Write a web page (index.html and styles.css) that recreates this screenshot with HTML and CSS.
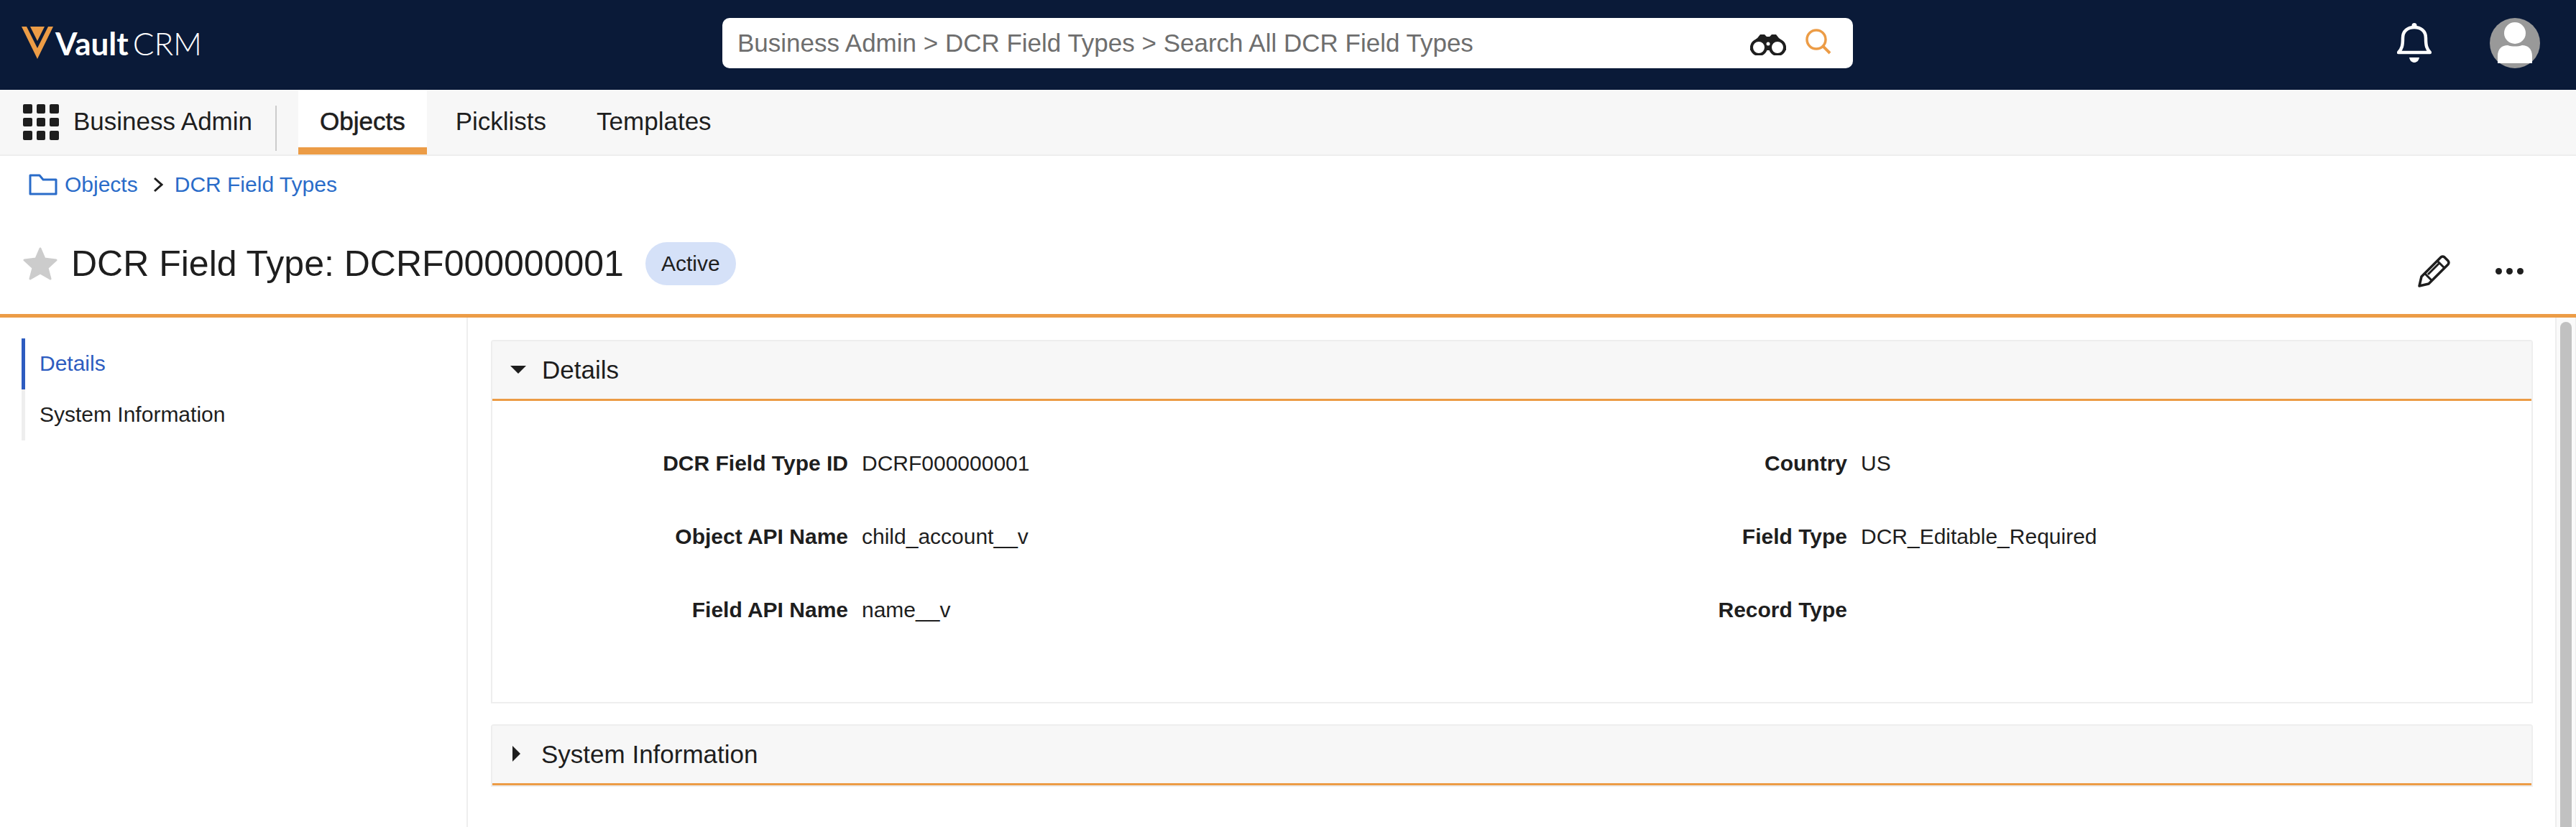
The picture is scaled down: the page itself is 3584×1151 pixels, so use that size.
FILE: index.html
```html
<!DOCTYPE html>
<html lang="en">
<head>
  <meta charset="UTF-8">
  <meta name="viewport" content="width=device-width, initial-scale=1.0">
  <title>DCR Field Type: DCRF000000001</title>
  <link rel="stylesheet" href="styles.css">
</head>
<body>
  <header class="top-bar">
    <div class="logo">
      <svg class="logo-mark" viewBox="0 0 44 46">
        <path fill="#ec9c46" fill-rule="evenodd" d="M0 0H44L22 45ZM7 0 22 30 37 0ZM12 0H32L22 20Z"/>
      </svg>
      <span class="logo-vault">Vault</span><span class="logo-crm">CRM</span>
    </div>
    <div class="search-box">
      <span class="search-text">Business Admin &gt; DCR Field Types &gt; Search All DCR Field Types</span>
      <svg class="binoculars" viewBox="0 0 50 30">
        <path fill="#1e1e1e" d="M14 1h6l3 3h4l3-3h6l4 5c5 3 9 9 10 14v3H0v-3C1 15 5 9 10 6Z"/>
        <circle cx="12" cy="19" r="10" fill="#fff" stroke="#1e1e1e" stroke-width="4"/>
        <circle cx="38" cy="19" r="10" fill="#fff" stroke="#1e1e1e" stroke-width="4"/>
        <circle cx="25" cy="14" r="2.5" fill="#fff"/>
      </svg>
      <svg class="search-icon" viewBox="0 0 36 36">
        <circle cx="15" cy="15" r="13" fill="none" stroke="#ec9c46" stroke-width="3.5"/>
        <path d="M24 24 34 34" stroke="#ec9c46" stroke-width="4" fill="none"/>
      </svg>
    </div>
    <div class="top-icons">
      <svg class="bell" viewBox="0 0 48 56">
        <path fill="none" stroke="#fff" stroke-width="4.500" stroke-linejoin="round" d="M2 41c5-5 6-10 6-20C8 11 15 6 24 6s16 5 16 15c0 10 1 15 6 20Z"/>
        <circle cx="24" cy="3.500" r="3.500" fill="#fff"/>
        <path fill="#fff" d="M17 48h14c-1 5-4 7-7 7s-6-2-7-7Z"/>
      </svg>
      <svg class="avatar" viewBox="0 0 70 70">
        <circle cx="35" cy="35" r="35" fill="#999"/>
        <circle cx="35" cy="21" r="15" fill="#fff"/>
        <path fill="#fff" d="M11 63V53c0-10 6-15 14-15 6 2 14 2 20 0 8 0 14 5 14 15v10Z"/>
      </svg>
    </div>
  </header>

  <nav class="tab-bar">
    <svg class="app-grid" viewBox="0 0 50 50">
      <rect x="0" y="0" width="13" height="13" rx="2"/><rect x="19" y="0" width="12" height="13" rx="2"/><rect x="37" y="0" width="13" height="13" rx="2"/>
      <rect x="0" y="19" width="13" height="12" rx="2"/><rect x="19" y="19" width="12" height="12" rx="2"/><rect x="37" y="19" width="13" height="12" rx="2"/>
      <rect x="0" y="37" width="13" height="13" rx="2"/><rect x="19" y="37" width="12" height="13" rx="2"/><rect x="37" y="37" width="13" height="13" rx="2"/>
    </svg>
    <span class="app-name">Business Admin</span>
    <div class="tabs">
      <a class="tab active">Objects</a>
      <a class="tab">Picklists</a>
      <a class="tab">Templates</a>
    </div>
  </nav>

  <div class="breadcrumb">
    <svg class="folder" viewBox="0 0 40 30">
      <path fill="none" stroke="#2a6cc9" stroke-width="3" stroke-linejoin="round" d="M2 2h13l5 6h18v20H2Z"/>
    </svg>
    <a>Objects</a>
    <svg class="crumb-arrow" viewBox="0 0 14 22">
      <path fill="none" stroke="#1e1e1e" stroke-width="3" d="M2 2 12 11 2 20"/>
    </svg>
    <a>DCR Field Types</a>
  </div>

  <div class="title-row">
    <svg class="star" viewBox="0 0 48 46">
      <path fill="#ccc" stroke="#ccc" stroke-width="3" stroke-linejoin="round" d="M24 2 30 16 46 18 34 29 38 44 24 36 10 44 14 29 2 18 18 16Z"/>
    </svg>
    <h1>DCR Field Type: DCRF000000001</h1>
    <span class="badge">Active</span>
    <div class="title-actions">
      <svg class="pencil" viewBox="0 0 45 45">
        <path fill="none" stroke="#1e1e1e" stroke-width="3.5" stroke-linejoin="round" d="M2 43 5 30 32 3c2-1.500 3-1.500 5 0l5 5c1.500 2 1.500 3 0 5L15 40Z"/>
        <path fill="none" stroke="#1e1e1e" stroke-width="3" d="M27 8 37 18M10 26l9 9M14 27 30 11"/>
      </svg>
      <div class="dots"><i></i><i></i><i></i></div>
    </div>
  </div>

  <div class="page-body">
    <aside class="side-nav">
      <ul>
        <li class="current">Details</li>
        <li>System Information</li>
      </ul>
    </aside>
    <main class="content">
      <section class="card">
        <div class="card-header">
          <span class="arrow-down"></span>
          <span>Details</span>
        </div>
        <div class="fields">
          <div class="field"><label>DCR Field Type ID</label><span>DCRF000000001</span></div>
          <div class="field"><label>Country</label><span>US</span></div>
          <div class="field"><label>Object API Name</label><span>child_account__v</span></div>
          <div class="field"><label>Field Type</label><span>DCR_Editable_Required</span></div>
          <div class="field"><label>Field API Name</label><span>name__v</span></div>
          <div class="field"><label>Record Type</label><span></span></div>
        </div>
      </section>
      <section class="card">
        <div class="card-header">
          <span class="arrow-right"></span>
          <span>System Information</span>
        </div>
      </section>
    </main>
    <div class="scroll-track"><div class="scroll-thumb"></div></div>
  </div>
</body>
</html>
```

FILE: styles.css
```css
html, body {
  height: 100%;
}
body {
  font-family: "Liberation Sans", Arial, sans-serif;
  margin: 0;
  color: #1e1e1e;
  background-color: #fff;
  display: flex;
  flex-direction: column;
  overflow: hidden;
}
.top-bar {
  height: 125px;
  flex: none;
  box-sizing: border-box;
  background-color: #0a1a38;
  display: flex;
  align-items: center;
  padding: 0 50px 5px 30px;
}
.logo {
  width: 975px;
  display: flex;
  align-items: center;
  color: #fff;
  font-family: Lato, sans-serif;
  font-size: 44px;
  line-height: 1;
}
.logo-mark {
  width: 44px;
  height: 46px;
  margin-right: 3px;
}
.logo-vault {
  font-weight: 700;
  margin-right: 6px;
}
.logo-crm {
  font-weight: 300;
}
.search-box {
  width: 1573px;
  height: 70px;
  box-sizing: border-box;
  background-color: #fff;
  border-radius: 10px;
  display: flex;
  align-items: center;
  padding: 0 30px 0 21px;
}
.search-text {
  flex: 1;
  font-size: 35px;
  color: #6e6e6e;
}
.binoculars {
  width: 50px;
  height: 30px;
  margin: 3px 27px 0 0;
}
.search-icon {
  width: 36px;
  height: 36px;
  margin-bottom: 5px;
}
.top-icons {
  flex: 1;
  display: flex;
  justify-content: flex-end;
  align-items: center;
  gap: 81px;
}
.bell {
  width: 48px;
  height: 56px;
}
.avatar {
  width: 70px;
  height: 70px;
}
.tab-bar {
  height: 92px;
  flex: none;
  box-sizing: border-box;
  background-color: #f7f7f7;
  border-bottom: 2px solid #eee;
  display: flex;
  align-items: stretch;
  padding-left: 32px;
}
.app-grid {
  width: 50px;
  height: 50px;
  fill: #1e1e1e;
  align-self: center;
}
.app-name {
  font-size: 35px;
  line-height: 88px;
  margin-left: 20px;
  padding-right: 34px;
  position: relative;
}
.app-name::after {
  content: "";
  position: absolute;
  right: 0;
  top: 22px;
  height: 63px;
  width: 2px;
  background-color: #ccc;
}
.tabs {
  display: flex;
  margin-left: 30px;
}
.tab {
  font-size: 35px;
  line-height: 88px;
  padding: 0 35px;
}
.tab.active {
  background-color: #fff;
  border-bottom: 10px solid #ec9c46;
  height: 80px;
  padding: 0 30px;
  margin-right: 5px;
  -webkit-text-stroke: 0.6px #1e1e1e;
}
.breadcrumb {
  height: 80px;
  flex: none;
  display: flex;
  align-items: center;
  padding-left: 40px;
  font-size: 30px;
  color: #2a6cc9;
}
.folder {
  width: 40px;
  height: 30px;
  margin-right: 10px;
}
.crumb-arrow {
  width: 14px;
  height: 22px;
  margin: 0 16px 0 21px;
}
.title-row {
  height: 145px;
  flex: none;
  box-sizing: border-box;
  border-bottom: 5px solid #ec9c46;
  display: flex;
  align-items: center;
  padding: 0 73px 0 32px;
}
.star {
  width: 48px;
  height: 46px;
  margin-right: 19px;
}
h1 {
  font-size: 50px;
  font-weight: 400;
  margin: 0;
}
.badge {
  margin-left: 30px;
  font-size: 30px;
  background-color: #d5e1f8;
  height: 60px;
  line-height: 60px;
  padding: 0 22px;
  border-radius: 30px;
}
.title-actions {
  margin-left: auto;
  display: flex;
  align-items: center;
  gap: 63px;
  padding-top: 20px;
}
.pencil {
  width: 45px;
  height: 45px;
}
.dots {
  display: flex;
  gap: 6px;
}
.dots i {
  width: 9px;
  height: 9px;
  border-radius: 50%;
  background-color: #1e1e1e;
}
.page-body {
  flex: 1;
  display: flex;
  min-height: 0;
}
.side-nav {
  width: 651px;
  flex: none;
  box-sizing: border-box;
  border-right: 2px solid #eee;
  padding: 29px 0 0 30px;
}
.side-nav ul {
  list-style: none;
  margin: 0;
  padding: 0;
}
.side-nav li {
  height: 71px;
  line-height: 69px;
  font-size: 30px;
  padding-left: 20px;
  border-left: 5px solid #eee;
}
.side-nav li.current {
  color: #2d5cc0;
  border-left-color: #2d5cc0;
}
.content {
  flex: 1;
  padding: 31px 31px 0 32px;
}
.card {
  border: 2px solid #eee;
  border-radius: 4px 4px 0 0;
  margin-bottom: 29px;
}
.card-header {
  height: 80px;
  background-color: #f7f7f7;
  border-bottom: 3px solid #ec9c46;
  display: flex;
  align-items: center;
  font-size: 35px;
}
.arrow-down {
  width: 0;
  height: 0;
  margin: 0 22px 2px 25px;
  border-left: 11px solid transparent;
  border-right: 11px solid transparent;
  border-top: 11px solid #1e1e1e;
}
.arrow-right {
  width: 0;
  height: 0;
  margin: 0 29px 2px 28px;
  border-top: 11px solid transparent;
  border-bottom: 11px solid transparent;
  border-left: 11px solid #1e1e1e;
}
.fields {
  display: grid;
  grid-template-columns: 1390px 1fr;
  grid-auto-rows: 102px;
  box-sizing: border-box;
  padding-top: 70px;
  height: 419px;
  font-size: 30px;
}
.field {
  display: flex;
  gap: 19px;
}
.field label {
  width: 495px;
  flex: none;
  text-align: right;
  font-weight: 700;
}
.scroll-track {
  width: 29px;
  flex: none;
  box-sizing: border-box;
  border-left: 2px solid #eee;
  border-right: 1px solid #eee;
  background-color: #fafafa;
  padding: 6px 5px 0;
}
.scroll-thumb {
  width: 16px;
  height: 100%;
  background-color: #c1c1c1;
  border-radius: 8px 8px 0 0;
}
```
